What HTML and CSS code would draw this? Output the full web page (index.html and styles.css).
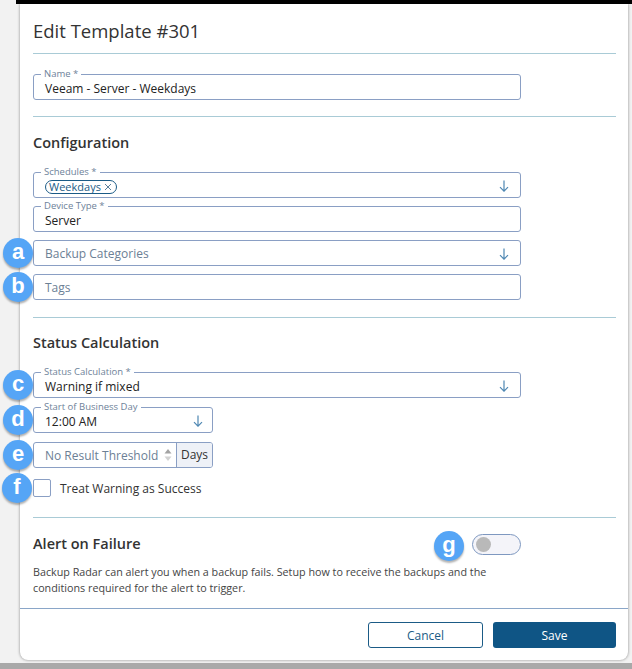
FILE: index.html
```html
<!DOCTYPE html>
<html lang="en">
<head>
    <meta charset="UTF-8">
    <meta name="viewport" content="width=device-width, initial-scale=1.0">
    <title>Edit Template #301</title>
    <link rel="stylesheet" href="styles.css">
</head>
<body>
    <div class="topbar"></div>
    <div class="modal">
        <div class="modal-body">
            <div class="section section-title">
                <h1>Edit Template #301</h1>
            </div>

            <!-- Name -->
            <div class="section section-name">
                <div class="field">
                    <span class="field-label">Name *</span>
                    <span class="field-value">Veeam - Server - Weekdays</span>
                </div>
            </div>

            <!-- Configuration -->
            <div class="section section-config">
                <h2>Configuration</h2>
                <div class="fields">
                    <div class="field select">
                        <span class="field-label">Schedules *</span>
                        <span class="chip">Weekdays <svg class="chip-x" width="8" height="8" viewBox="0 0 8 8"><path d="M1 1L7 7M7 1L1 7" stroke="#5a7f9c" stroke-width="1"/></svg></span>
                        <svg class="arrow" width="10" height="12" viewBox="0 0 10 12"><path d="M5 0.5V11.2M1 7.2L5 11.2L9 7.2" fill="none" stroke="#4f88b3" stroke-width="1.2"/></svg>
                    </div>
                    <div class="field">
                        <span class="field-label">Device Type *</span>
                        <span class="field-value">Server</span>
                    </div>
                    <div class="field select">
                        <span class="badge">a</span>
                        <span class="placeholder">Backup Categories</span>
                        <svg class="arrow" width="10" height="12" viewBox="0 0 10 12"><path d="M5 0.5V11.2M1 7.2L5 11.2L9 7.2" fill="none" stroke="#4f88b3" stroke-width="1.2"/></svg>
                    </div>
                    <div class="field">
                        <span class="badge">b</span>
                        <span class="placeholder">Tags</span>
                    </div>
                </div>
            </div>

            <!-- Status Calculation -->
            <div class="section section-status">
                <h2>Status Calculation</h2>
                <div class="fields status-fields">
                    <div class="field select">
                        <span class="badge">c</span>
                        <span class="field-label">Status Calculation *</span>
                        <span class="field-value">Warning if mixed</span>
                        <svg class="arrow" width="10" height="12" viewBox="0 0 10 12"><path d="M5 0.5V11.2M1 7.2L5 11.2L9 7.2" fill="none" stroke="#4f88b3" stroke-width="1.2"/></svg>
                    </div>
                    <div class="field select small">
                        <span class="badge">d</span>
                        <span class="field-label">Start of Business Day</span>
                        <span class="field-value">12:00 AM</span>
                        <svg class="arrow" width="10" height="12" viewBox="0 0 10 12"><path d="M5 0.5V11.2M1 7.2L5 11.2L9 7.2" fill="none" stroke="#4f88b3" stroke-width="1.2"/></svg>
                    </div>
                    <div class="field small number">
                        <span class="badge">e</span>
                        <span class="placeholder">No Result Threshold</span>
                        <svg class="spinner" width="8" height="14" viewBox="0 0 8 14"><path d="M4 1L7.5 5.5H0.5Z" fill="#a3a3a3"/><path d="M4 13L7.5 8.5H0.5Z" fill="#d2d2d2"/></svg>
                        <span class="addon">Days</span>
                    </div>
                    <div class="check-row">
                        <span class="badge">f</span>
                        <span class="checkbox"></span>
                        <span class="check-label">Treat Warning as Success</span>
                    </div>
                </div>
            </div>

            <!-- Alert on Failure -->
            <div class="section section-alert">
                <div class="alert-row">
                    <h2>Alert on Failure</h2>
                    <div class="toggle-wrap">
                        <span class="badge inline">g</span>
                        <span class="toggle"><span class="knob"></span></span>
                    </div>
                </div>
                <p>Backup Radar can alert you when a backup fails. Setup how to receive the backups and the conditions required for the alert to trigger.</p>
            </div>
        </div>

        <div class="modal-footer">
            <button class="btn btn-cancel">Cancel</button>
            <button class="btn btn-save">Save</button>
        </div>
    </div>
</body>
</html>
```

FILE: styles.css
```css
body {
    margin: 0;
    width: 632px;
    height: 669px;
    overflow: hidden;
    font-family: "Open Sans", sans-serif;
    color: #222;
    background: linear-gradient(to bottom, #f2f2f2 0, #f2f2f2 663px, #a9a9a9 663px);
}
.topbar {
    height: 4px;
    margin-left: 16px;
    background: #000;
}
.modal {
    margin-left: 20px;
    width: 608px;
    background: #fff;
    border-radius: 0 0 8px 8px;
    box-shadow: 0 0 3px rgba(0, 0, 0, 0.45);
}
.modal-body {
    padding: 0 12px 0 13px;
}
.section {
    border-bottom: 1px solid #a9cbd6;
}
.section-title {
    padding: 15px 0 10px;
}
h1 {
    margin: 0;
    font-size: 18.5px;
    line-height: 24px;
    font-weight: 500;
    color: #333;
}
h2 {
    margin: 0;
    font-size: 14.5px;
    line-height: 20px;
    font-weight: 600;
    color: #333;
}
.section-name {
    padding: 20px 0 16px;
}
.section-config {
    padding: 16px 0 17px;
}
.section-status {
    padding: 15px 0 20px;
}
.section-alert {
    padding: 14px 0 12px;
    border-bottom: none;
}
.section-config h2,
.section-status h2 {
    margin-bottom: 19px;
}
.fields {
    display: flex;
    flex-direction: column;
    gap: 8px;
}
.status-fields {
    gap: 9px;
}
.field {
    position: relative;
    box-sizing: border-box;
    width: 488px;
    height: 26px;
    padding: 0 11px;
    border: 1px solid #8a9fc4;
    border-radius: 3px;
    display: flex;
    align-items: center;
    font-size: 12px;
}
.field.select {
    justify-content: space-between;
}
.field.small {
    width: 180px;
    padding-right: 9px;
}
.field-label {
    position: absolute;
    top: -6px;
    left: 7px;
    padding: 0 3px;
    background: #fff;
    font-size: 9.5px;
    line-height: 10px;
    color: #6e8299;
}
.field-value {
    padding-top: 2px;
    color: #222;
}
.placeholder {
    color: #6c8095;
}
.arrow {
    flex: none;
    margin-top: 1px;
}
.chip {
    margin-top: 3px;
    padding: 0 4px 0 3px;
    height: 12px;
    line-height: 12px;
    border: 1px solid #1b5b86;
    border-radius: 8px;
    font-size: 11px;
    color: #1b5b86;
    display: flex;
    align-items: center;
    gap: 3px;
}
.check-row {
    position: relative;
    margin-top: 2px;
    display: flex;
    align-items: center;
    gap: 9px;
}
.field.number {
    padding-right: 0;
}
.field.number .placeholder {
    flex: 1;
}
.spinner {
    margin-right: 4px;
}
.addon {
    box-sizing: border-box;
    height: 24px;
    width: 36px;
    line-height: 24px;
    text-align: center;
    background: #eef1f7;
    border-left: 1px solid #8a9fc4;
    border-radius: 0 2px 2px 0;
    color: #333;
}
.checkbox {
    box-sizing: border-box;
    width: 18px;
    height: 18px;
    border: 1px solid #8a9fc4;
    border-radius: 2px;
}
.check-label {
    font-size: 12px;
    color: #333;
}
.badge {
    position: absolute;
    left: -31px;
    top: 50%;
    margin-top: -15px;
    width: 30px;
    height: 30px;
    border-radius: 50%;
    background: #55a5f6;
    box-shadow: 0 2px 2px rgba(0, 0, 0, 0.3);
    color: #fff;
    font-family: "Liberation Sans", Arial, sans-serif;
    font-weight: bold;
    font-size: 22px;
    line-height: 28px;
    text-align: center;
    z-index: 1;
}
.badge.inline {
    position: static;
    margin-top: 3px;
}
.alert-row {
    width: 488px;
    height: 22px;
    display: flex;
    align-items: flex-start;
    justify-content: space-between;
}
.alert-row h2 {
    margin-top: 2px;
}
.toggle-wrap {
    display: flex;
    align-items: center;
    gap: 8px;
    margin-top: -4px;
}
.toggle {
    box-sizing: border-box;
    width: 49px;
    height: 21px;
    padding: 2px 3px;
    border: 1px solid #7e98c0;
    border-radius: 11px;
    background: #f4f4f9;
    display: flex;
    align-items: center;
}
.knob {
    width: 15px;
    height: 15px;
    border-radius: 50%;
    background: #b9b9b9;
}
.section-alert p {
    margin: 10px 0 0;
    font-size: 10.75px;
    line-height: 16px;
    color: #444;
    max-width: 470px;
}
.modal-footer {
    border-top: 1px solid #8aa6c8;
    padding: 13px 12px 12px;
    display: flex;
    justify-content: flex-end;
    gap: 10px;
}
.btn {
    height: 26px;
    border-radius: 3px;
    font-family: "Open Sans", sans-serif;
    font-size: 12px;
    cursor: pointer;
}
.btn-cancel {
    width: 115px;
    border: 1px solid #1b5b86;
    background: #fff;
    color: #1b5b86;
}
.btn-save {
    width: 123px;
    border: none;
    background: #0f5585;
    color: #fff;
}
```
